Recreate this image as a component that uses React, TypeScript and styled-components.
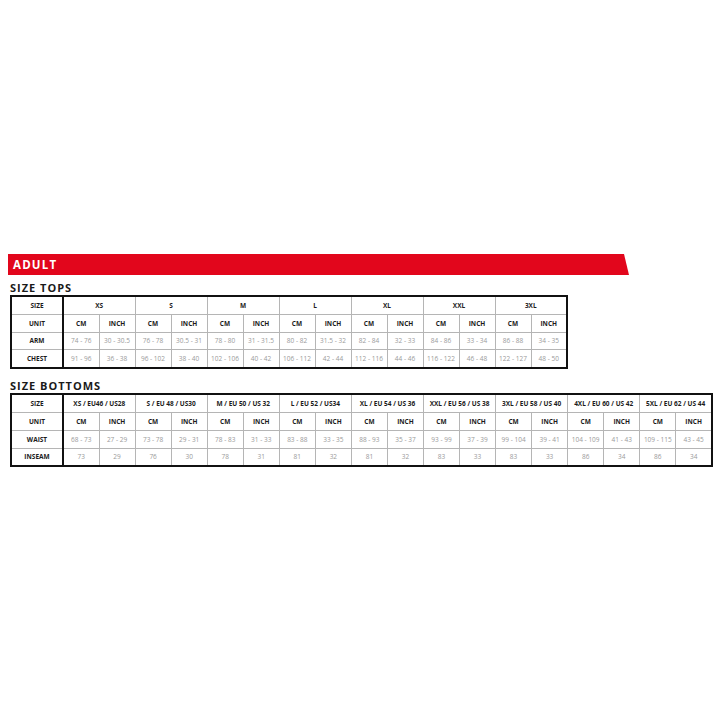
import React from "react";
import styled, { createGlobalStyle } from "styled-components";

const GlobalStyle = createGlobalStyle`
    html, body {
        margin: 0;
        padding: 0;
        background: #ffffff;
        font-family: "Open Sans", "Liberation Sans", sans-serif;
    }
`;

const Page = styled.div`
    width: 720px;
    height: 720px;
    box-sizing: border-box;
    padding: 254px 0 0 8px;
`;

const Banner = styled.div`
    width: 621px;
    height: 21px;
    background: #e2061c;
    clip-path: polygon(0 0, 616px 0, 100% 100%, 0 100%);
    display: flex;
    align-items: center;
    padding-left: 5px;
    box-sizing: border-box;
    color: #ffffff;
    font-weight: 700;
    font-size: 11.5px;
    letter-spacing: 1.2px;
`;

const Heading = styled.div<{ $top: number }>`
    margin: ${(p) => p.$top}px 0 1px 2px;
    font-size: 11px;
    line-height: 12px;
    font-weight: 700;
    letter-spacing: 1px;
    color: #1a1a1a;
`;

const Table = styled.table<{ $width: number }>`
    margin-left: 2px;
    width: ${(p) => p.$width}px;
    table-layout: fixed;
    border-collapse: collapse;
    border: 2px solid #111111;
`;

const Cell = styled.td<{ $head?: boolean; $label?: boolean }>`
    height: 16.8px;
    padding: 0;
    text-align: center;
    vertical-align: middle;
    border: 1px solid #b5b5b5;
    font-size: 6.5px;
    white-space: nowrap;
    font-weight: ${(p) => (p.$head || p.$label ? 700 : 400)};
    color: ${(p) => (p.$head || p.$label ? "#1c1c1c" : "#9a9a9a")};
    ${(p) => (p.$label ? "border-right: 2px solid #111111;" : "")}
`;

interface SizeTableProps {
    width: number;
    sizes: string[];
    rows: { label: string; values: string[] }[];
}

function SizeTable({ width, sizes, rows }: SizeTableProps) {
    return (
        <Table $width={width}>
            <colgroup>
                <col style={{ width: 52 }} />
                {sizes.flatMap((s) => [<col key={s + "c"} />, <col key={s + "i"} />])}
            </colgroup>
            <tbody>
                <tr>
                    <Cell $label>SIZE</Cell>
                    {sizes.map((s) => (
                        <Cell $head colSpan={2} key={s}>
                            {s}
                        </Cell>
                    ))}
                </tr>
                <tr>
                    <Cell $label>UNIT</Cell>
                    {sizes.flatMap((s) => [
                        <Cell $head key={s + "c"}>CM</Cell>,
                        <Cell $head key={s + "i"}>INCH</Cell>,
                    ])}
                </tr>
                {rows.map((r) => (
                    <tr key={r.label}>
                        <Cell $label>{r.label}</Cell>
                        {r.values.map((v, i) => (
                            <Cell key={i}>{v}</Cell>
                        ))}
                    </tr>
                ))}
            </tbody>
        </Table>
    );
}

const topSizes = ["XS", "S", "M", "L", "XL", "XXL", "3XL"];
const topRows = [
    {
        label: "ARM",
        values: ["74 - 76", "30 - 30.5", "76 - 78", "30.5 - 31", "78 - 80", "31 - 31.5", "80 - 82", "31.5 - 32", "82 - 84", "32 - 33", "84 - 86", "33 - 34", "86 - 88", "34 - 35"],
    },
    {
        label: "CHEST",
        values: ["91 - 96", "36 - 38", "96 - 102", "38 - 40", "102 - 106", "40 - 42", "106 - 112", "42 - 44", "112 - 116", "44 - 46", "116 - 122", "46 - 48", "122 - 127", "48 - 50"],
    },
];

const bottomSizes = [
    "XS / EU46 / US28",
    "S / EU 48 / US30",
    "M / EU 50 / US 32",
    "L / EU 52 / US34",
    "XL / EU 54 / US 36",
    "XXL / EU 56 / US 38",
    "3XL / EU 58 / US 40",
    "4XL / EU 60 / US 42",
    "5XL / EU 62 / US 44",
];
const bottomRows = [
    {
        label: "WAIST",
        values: ["68 - 73", "27 - 29", "73 - 78", "29 - 31", "78 - 83", "31 - 33", "83 - 88", "33 - 35", "88 - 93", "35 - 37", "93 - 99", "37 - 39", "99 - 104", "39 - 41", "104 - 109", "41 - 43", "109 - 115", "43 - 45"],
    },
    {
        label: "INSEAM",
        values: ["73", "29", "76", "30", "78", "31", "81", "32", "81", "32", "83", "33", "83", "33", "86", "34", "86", "34"],
    },
];

export default function App() {
    return (
        <>
            <GlobalStyle />
            <Page>
                <Banner>ADULT</Banner>
                <Heading $top={7}>SIZE TOPS</Heading>
                <SizeTable width={558} sizes={topSizes} rows={topRows} />
                <Heading $top={11}>SIZE BOTTOMS</Heading>
                <SizeTable width={703} sizes={bottomSizes} rows={bottomRows} />
            </Page>
        </>
    );
}
